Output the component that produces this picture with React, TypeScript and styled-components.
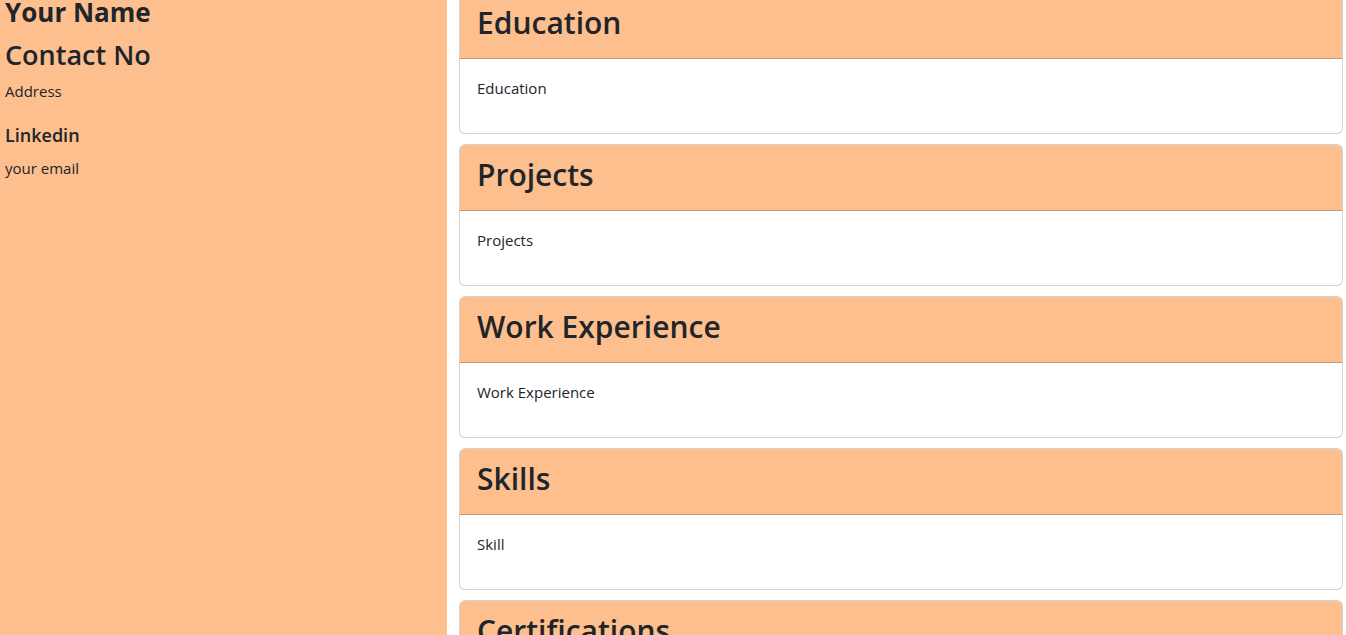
import React from "react";
import styled, { createGlobalStyle } from "styled-components";

const PEACH = "#fdbf8e";
const INK = "#212529";

const GlobalStyle = createGlobalStyle`
  html { overflow: hidden; }
  body {
    margin: 0;
    font-family: "Open Sans", "Noto Sans", "DejaVu Sans", sans-serif;
    font-size: 15px;
    line-height: 24px;
    color: ${INK};
    background: #ffffff;
  }
  * { box-sizing: border-box; }
`;

const Page = styled.div`
  display: grid;
  grid-template-columns: 447px 1fr;
  column-gap: 12px;
  padding-right: 3px;
  margin-top: -8px;
  min-height: calc(100vh + 8px);
`;

const Sidebar = styled.aside`
  background: ${PEACH};
  padding: 4px 5px 0;
`;

const NameTitle = styled.h3`
  margin: 0 0 8px;
  font-size: 26px;
  line-height: 33.6px;
  font-weight: 700;
`;

const ContactTitle = styled.h3`
  margin: 0 0 8px;
  font-size: 27px;
  line-height: 33.6px;
  font-weight: 600;
`;

const InfoText = styled.p`
  margin: 0 0 16px;
  font-size: 15px;
  line-height: 24px;
`;

const LinkTitle = styled.h5`
  margin: 20px 0 9px;
  font-size: 18px;
  line-height: 24px;
  font-weight: 600;
`;

const Main = styled.main`
  display: flex;
  flex-direction: column;
  gap: 10px;
`;

const Card = styled.section`
  border: 1px solid rgba(0, 0, 0, 0.175);
  border-radius: 6px;
  background: #fff;
  overflow: hidden;
`;

const CardHeader = styled.header`
  background: ${PEACH};
  padding: 11px 17px 8px;
  border-bottom: 1px solid rgba(0, 0, 0, 0.2);
`;

const CardTitle = styled.h2`
  margin: 0 0 8px;
  font-size: 30px;
  line-height: 38px;
  font-weight: 600;
`;

const CardBody = styled.div`
  padding: 17px 17px 17px;
`;

const CardText = styled.p`
  margin: 0 0 16px;
  font-size: 15px;
  line-height: 24px;
`;

const sections = [
  { title: "Education", body: "Education" },
  { title: "Projects", body: "Projects" },
  { title: "Work Experience", body: "Work Experience" },
  { title: "Skills", body: "Skill" },
  { title: "Certifications", body: "Certifications" },
];

export default function App() {
  return (
    <>
      <GlobalStyle />
      <Page>
        <Sidebar>
          <NameTitle>Your Name</NameTitle>
          <ContactTitle>Contact No</ContactTitle>
          <InfoText>Address</InfoText>
          <LinkTitle>Linkedin</LinkTitle>
          <InfoText>your email</InfoText>
        </Sidebar>
        <Main>
          {sections.map((s) => (
            <Card key={s.title}>
              <CardHeader>
                <CardTitle>{s.title}</CardTitle>
              </CardHeader>
              <CardBody>
                <CardText>{s.body}</CardText>
              </CardBody>
            </Card>
          ))}
        </Main>
      </Page>
    </>
  );
}
